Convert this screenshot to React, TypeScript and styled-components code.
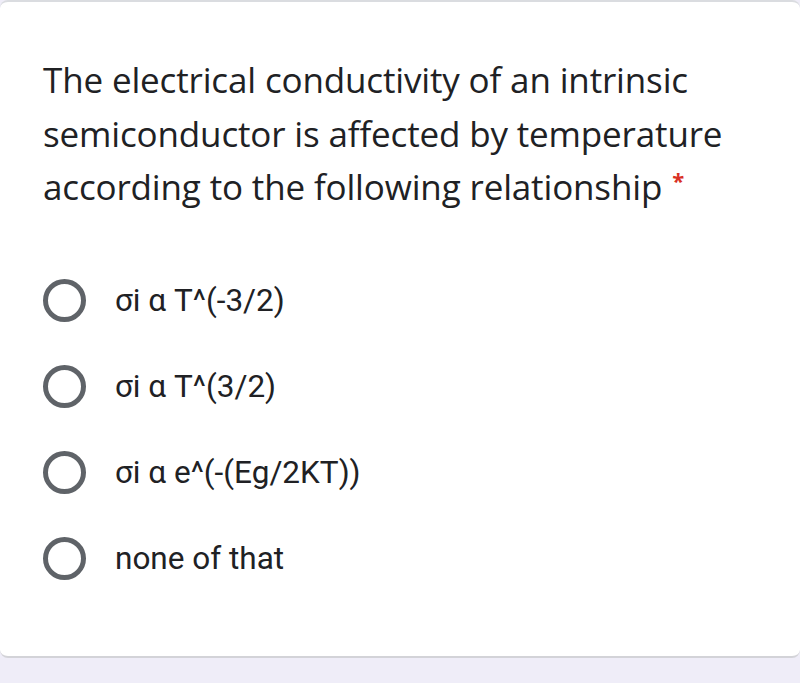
import React from "react";
import styled, { createGlobalStyle } from "styled-components";

const Global = createGlobalStyle`
  html, body { margin: 0; padding: 0; background: #efedf8; }
  body { width: 800px; height: 683px; overflow: hidden; }
`;

const Card = styled.div`
  box-sizing: border-box;
  width: 800px;
  height: 658px;
  background: #ffffff;
  border-top: 2px solid #dadce0;
  border-bottom: 2px solid #d3d3d8;
  border-radius: 8px;
  padding: 51px 43px 0 43px;
`;

const Title = styled.div`
  font-family: "Open Sans", sans-serif;
  font-size: 35px;
  line-height: 53.5px;
  color: #202124;
  letter-spacing: -0.15px;
`;

const Star = styled.span`
  display: inline-block;
  color: #d93025;
  font-family: "Open Sans", sans-serif;
  font-size: 22px;
  font-weight: 700;
  line-height: 1;
  margin-left: 10px;
  vertical-align: 11px;
`;

const Options = styled.div`
  display: flex;
  flex-direction: column;
  gap: 43px;
  margin-top: 65px;
`;

const Option = styled.label`
  display: flex;
  align-items: center;
  gap: 29px;
  height: 43px;
`;

const Radio = styled.span`
  box-sizing: border-box;
  width: 43px;
  height: 43px;
  border-radius: 50%;
  border: 5px solid #5f6368;
  flex: none;
`;

const OptionText = styled.span`
  font-family: Roboto, sans-serif;
  font-size: 31.5px;
  line-height: 43px;
  color: #202124;
`;

const options = ["σi α T^(-3/2)", "σi α T^(3/2)", "σi α e^(-(Eg/2KT))", "none of that"];

export default function App() {
  return (
    <>
      <Global />
      <Card>
        <Title>
          The electrical conductivity of an intrinsic semiconductor is affected by temperature according to the following relationship
          <Star>*</Star>
        </Title>
        <Options>
          {options.map((o) => (
            <Option key={o}>
              <Radio />
              <OptionText>{o}</OptionText>
            </Option>
          ))}
        </Options>
      </Card>
    </>
  );
}
